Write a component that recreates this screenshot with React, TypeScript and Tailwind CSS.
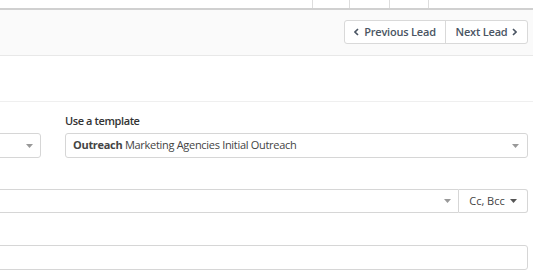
import React from "react"

const Caret: React.FC<{ className?: string }> = ({ className }) => (
    <svg width="7" height="4" viewBox="0 0 7 4" className={className}>
        <path d="M0 0 L7 0 L3.5 4 Z" fill="currentColor" />
    </svg>
)

const Chevron: React.FC<{ dir: "left" | "right" }> = ({ dir }) => (
    <svg width="5" height="8" viewBox="0 0 5 8" className="inline-block">
        <path
            d={dir === "left" ? "M4 1 L1 4 L4 7" : "M1 1 L4 4 L1 7"}
            stroke="currentColor"
            strokeWidth="1.6"
            fill="none"
        />
    </svg>
)

export default function App() {
    return (
        <div className="w-[533px] h-[272px] overflow-hidden bg-white text-[11px] text-[#333]" style={{ fontFamily: '"Open Sans", "Liberation Sans", sans-serif' }}>
            {/* table header remnant */}
            <div className="flex h-[10px] border-b-2 border-[#d0d0d0]">
                <div className="w-[313px] border-r border-[#ddd]" />
                <div className="w-[37px] border-r border-[#ddd]" />
                <div className="w-[40px] border-r border-[#ddd]" />
                <div className="w-[39px] border-r border-[#ddd]" />
                <div className="flex-1" />
            </div>

            {/* lead nav */}
            <div className="h-[46px] bg-[#fafafa] border-b border-[#e8e8e8] flex justify-end items-start pt-[10px] pr-[5px]">
                <div className="flex h-[24px] bg-white border border-[#d9d9d9] rounded-[3px] font-semibold tracking-[-0.2px] text-[#4a5563]">
                    <button className="w-[101px] flex items-center justify-center gap-[5px] border-r border-[#d9d9d9]">
                        <Chevron dir="left" />
                        <span>Previous Lead</span>
                    </button>
                    <button className="w-[81px] flex items-center justify-center gap-[5px]">
                        <span>Next Lead</span>
                        <Chevron dir="right" />
                    </button>
                </div>
            </div>

            <div className="h-[46px] border-b border-[#efefef]" />

            {/* template row */}
            <div className="flex gap-[24px] pr-[5px] pt-[11px]">
                <div className="w-[51px] -ml-[10px] pt-[20px]">
                    <div className="h-[25px] border border-[#d6d6d6] rounded-[3px] flex items-center justify-end pr-[7px] text-[#999]">
                        <Caret />
                    </div>
                </div>
                <div className="flex-1">
                    <div className="font-semibold text-[#333] tracking-[-0.4px] leading-[16px] mb-[4px]">Use a template</div>
                    <div className="h-[25px] border border-[#d6d6d6] rounded-[3px] flex items-center justify-between pl-[7px] pr-[8px] text-[#444]">
                        <span className="tracking-[-0.3px]"><span className="font-bold">Outreach</span> Marketing Agencies Initial Outreach</span>
                        <Caret className="text-[#999]" />
                    </div>
                </div>
            </div>

            {/* recipients */}
            <div className="flex pr-[5px] mt-[31px] -ml-[10px]">
                <div className="flex-1 h-[24px] border border-[#d6d6d6] rounded-l-[3px] flex items-center justify-end pr-[7px] text-[#999]">
                    <Caret />
                </div>
                <button className="w-[69px] h-[24px] border border-l-0 border-[#d6d6d6] rounded-r-[3px] flex items-center justify-center gap-[5px] text-[#444]">
                    <span>Cc, Bcc</span>
                    <Caret className="text-[#555]" />
                </button>
            </div>

            {/* subject */}
            <div className="pr-[5px] mt-[32px] -ml-[10px]">
                <div className="h-[25px] border border-[#d6d6d6] rounded-[3px]" />
            </div>
        </div>
    )
}
